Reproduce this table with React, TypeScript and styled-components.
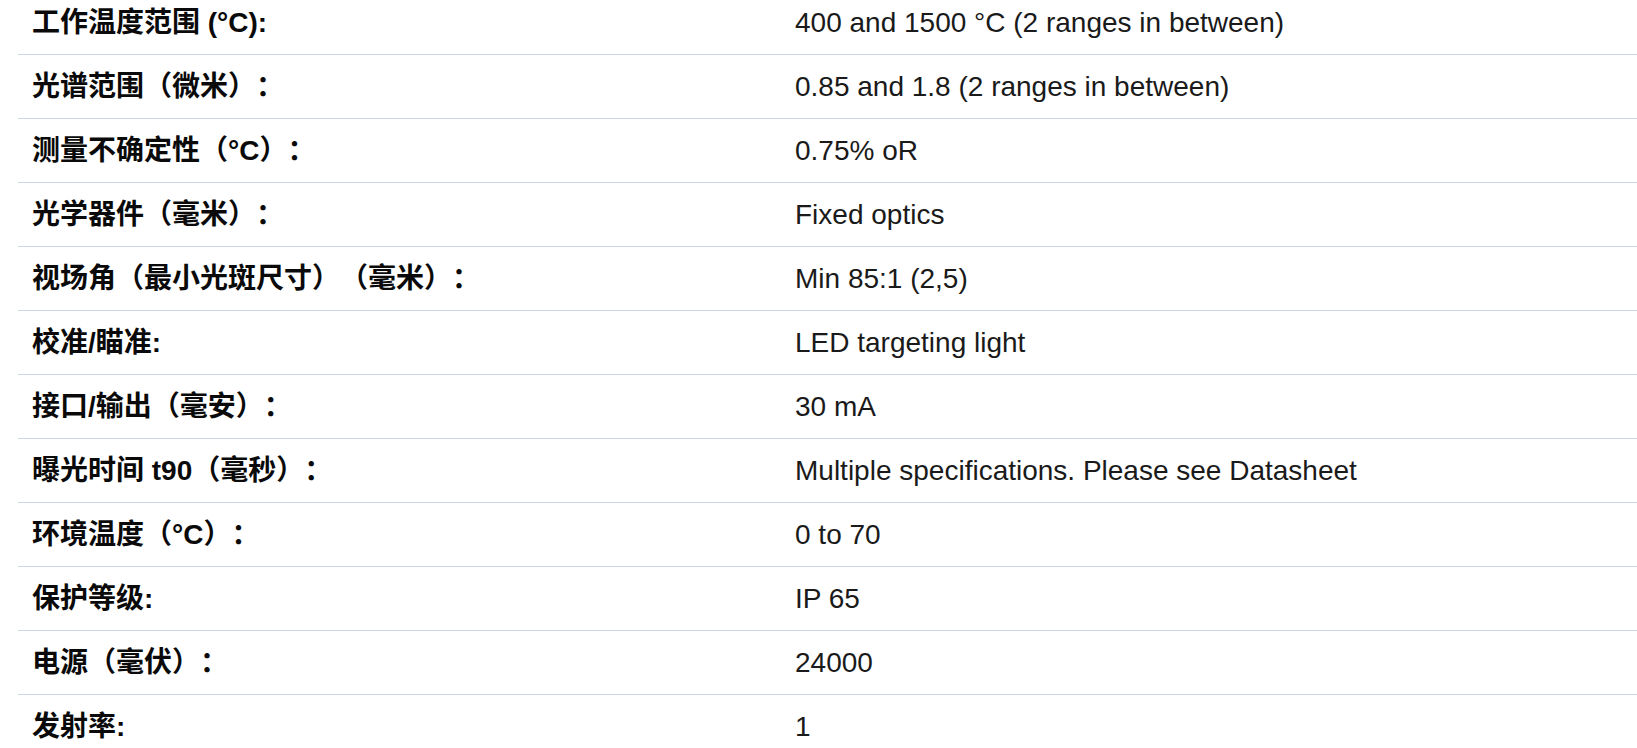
import React from "react";
import styled, { createGlobalStyle } from "styled-components";

const GlobalStyle = createGlobalStyle`
  html, body {
    margin: 0;
    padding: 0;
    background: #ffffff;
    overflow: hidden;
  }
  body {
    font-family: "Liberation Sans", "Noto Sans CJK SC", Arial, sans-serif;
  }
`;

const Page = styled.div`
  width: 1637px;
  height: 748px;
  overflow: hidden;
  padding-left: 18px;
  box-sizing: border-box;
`;

const Table = styled.div`
  display: flex;
  flex-direction: column;
  margin-top: -9px;
`;

const Row = styled.div`
  display: grid;
  grid-template-columns: 763px 1fr;
  align-items: center;
  height: 64px;
  box-sizing: border-box;
  border-bottom: 1px solid #cdd6e9;
`;

const Label = styled.div`
  padding-left: 14px;
  font-family: "Liberation Sans", "Noto Sans CJK SC", Arial, sans-serif;
  font-weight: 700;
  font-size: 28px;
  line-height: 40px;
  color: #0a0a0a;
  white-space: nowrap;
  text-spacing-trim: space-all;
`;

const Value = styled.div`
  padding-left: 14px;
  font-family: "Liberation Sans", "Noto Sans CJK SC", Arial, sans-serif;
  font-weight: 400;
  font-size: 28px;
  line-height: 40px;
  color: #1a1a1a;
  white-space: nowrap;
`;

const rows: [string, string][] = [
  ["工作温度范围 (°C):", "400 and 1500 °C (2 ranges in between)"],
  ["光谱范围（微米）：", "0.85 and 1.8 (2 ranges in between)"],
  ["测量不确定性（°C）：", "0.75% oR"],
  ["光学器件（毫米）：", "Fixed optics"],
  ["视场角（最小光斑尺寸）（毫米）：", "Min 85:1 (2,5)"],
  ["校准/瞄准:", "LED targeting light"],
  ["接口/输出（毫安）：", "30 mA"],
  ["曝光时间 t90（毫秒）：", "Multiple specifications. Please see Datasheet"],
  ["环境温度（°C）：", "0 to 70"],
  ["保护等级:", "IP 65"],
  ["电源（毫伏）：", "24000"],
  ["发射率:", "1"],
];

export default function App() {
  return (
    <>
      <GlobalStyle />
      <Page>
        <Table>
          {rows.map(([label, value]) => (
            <Row key={label}>
              <Label>{label}</Label>
              <Value>{value}</Value>
            </Row>
          ))}
        </Table>
      </Page>
    </>
  );
}
